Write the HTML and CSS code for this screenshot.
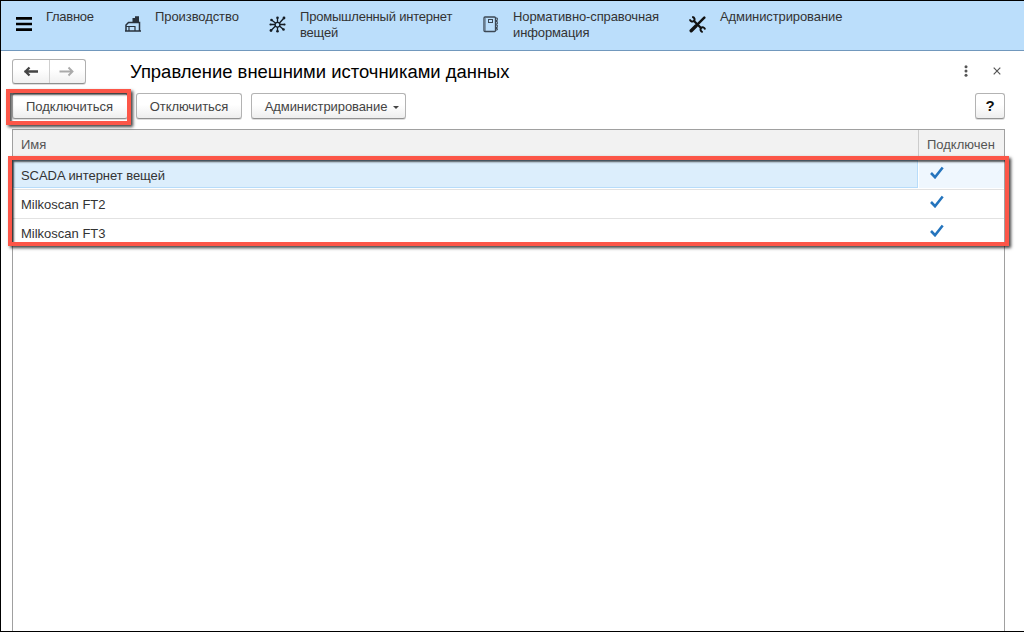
FILE: index.html
```html
<!DOCTYPE html>
<html lang="ru">
<head>
<meta charset="utf-8">
<title>Управление внешними источниками данных</title>
<link rel="stylesheet" href="styles.css">
</head>
<body>
<div class="app">
  <nav class="sections">
    <svg class="menu-icon" width="16" height="14" viewBox="0 0 16 14"><path d="M0 1.400h16M0 7h16M0 12.600h16" stroke="#000" stroke-width="2.600"/></svg>
    <a class="section main"><span class="t1">Главное</span></a>
    <a class="section production">
      <svg width="16" height="16" viewBox="0 0 16 16"><path d="M7.500 6V2H10V.3h4V6z" fill="#29323c"/><path d="M1 15V9l2.500-2.500h11V15M0 15h16" fill="none" stroke="#29323c" stroke-width="1.500"/><path d="M1 10.500h9.500M4 15v-4.500M10 15v-4.500" fill="none" stroke="#29323c" stroke-width="1.200"/></svg>
      <span class="t2">Производство</span>
    </a>
    <a class="section iot">
      <svg width="17" height="17" viewBox="0 0 17 17"><g stroke="#141c24" fill="none" stroke-width="1.300"><circle cx="8.500" cy="8.800" r="2.400"/><path d="M8.500 6V2M8.500 11v4M6.500 7 2.500 4M10.500 7 15 2M6.500 10l-4.500 4.500M10.500 10l4 3.500M6 8.500H1.500M11 8.500h4.500"/></g><g fill="#141c24"><circle cx="8.500" cy="1.800" r="1.300"/><circle cx="8.500" cy="15.200" r="1.300"/><circle cx="2.500" cy="4" r="1.300"/><circle cx="15" cy="2" r="1.400"/><circle cx="2" cy="14.500" r="1.400"/><circle cx="14.500" cy="13.500" r="1.300"/><circle cx="1.500" cy="8.500" r="1.100"/><circle cx="15.500" cy="8.500" r="1.100"/></g></svg>
      <span class="t3">Промышленный интернет<br>вещей</span>
    </a>
    <a class="section reference">
      <svg width="16" height="17" viewBox="0 0 16 17"><g fill="none" stroke="#3c4854"><rect x="1" y="1" width="11.500" height="14.500" rx="1" stroke-width="1.300"/><path d="M2.500 2v13" opacity=".45"/><rect x="5.500" y="3.500" width="4" height="3"/><path d="M13 2h1.300v2.500H13M13 5.500h1.300V8H13M13 9h1.300v2.500H13M13 12.500h1.300V14H13"/></g></svg>
      <span class="t4">Нормативно-справочная<br>информация</span>
    </a>
    <a class="section admin">
      <svg width="17" height="17" viewBox="0 0 17 17"><g fill="none" stroke="#111"><path d="M4.500 4.500l8 8" stroke-width="2.300"/><path d="M3.200.9C5.800 1.300 6 3.800 4.900 4.900S1.400 5.800.9 3.400" stroke-width="2"/><path d="M16.100 13.400c-.6-2.200-2.800-2.600-3.900-1.500s-.9 3.500 1.500 4.200" stroke-width="2"/><path d="M15.300 1.700l-7 7" stroke-width="2.500" stroke-linecap="round"/><path d="M7.200 9.800l-5 5" stroke-width="3.400" stroke-linecap="round"/></g></svg>
      <span class="t5">Администрирование</span>
    </a>
  </nav>
  <main class="page">
    <header class="title-row">
      <div class="history">
        <span><svg width="16" height="12" viewBox="0 0 16 12"><path d="M1.500 5.500h13.500M6.500 1.500l-4 4 4 4" fill="none" stroke="#444" stroke-width="2.300"/></svg></span>
        <span><svg width="16" height="12" viewBox="0 0 16 12"><path d="M.5 5.500h13M9.500 1.500l4 4-4 4" fill="none" stroke="#aaa" stroke-width="1.900"/></svg></span>
      </div>
      <h1>Управление внешними источниками данных</h1>
      <svg class="dots" width="4" height="12" viewBox="0 0 4 12"><g fill="#555"><circle cx="2" cy="1.700" r="1.500"/><circle cx="2" cy="6" r="1.500"/><circle cx="2" cy="10.300" r="1.500"/></g></svg>
      <svg class="close" width="8" height="8" viewBox="0 0 8 8"><path d="M.7.700l6.600 6.600M7.300.700.700 7.300" stroke="#555" stroke-width="1.200"/></svg>
    </header>
    <div class="toolbar">
      <button class="btn connect"><span>Подключиться</span></button>
      <button class="btn disconnect"><span>Отключиться</span></button>
      <button class="btn manage"><span>Администрирование</span><i class="caret"></i></button>
      <button class="btn help">?</button>
    </div>
    <section class="grid">
      <div class="row head"><div class="name">Имя</div><div class="state">Подключен</div></div>
      <div class="row selected"><div class="name"><span class="scada">SCADA интернет вещей</span></div><div class="state"><svg width="14" height="13" viewBox="0 0 14 13"><path d="M1 7l4 4.200L12.700 1.500" fill="none" stroke="#2474bd" stroke-width="2.600"/></svg></div></div>
      <div class="row"><div class="name">Milkoscan FT2</div><div class="state"><svg width="14" height="13" viewBox="0 0 14 13"><path d="M1 7l4 4.200L12.700 1.500" fill="none" stroke="#2474bd" stroke-width="2.600"/></svg></div></div>
      <div class="row last"><div class="name">Milkoscan FT3</div><div class="state"><svg width="14" height="13" viewBox="0 0 14 13"><path d="M1 7l4 4.200L12.700 1.500" fill="none" stroke="#2474bd" stroke-width="2.600"/></svg></div></div>
    </section>
  </main>
  <div class="mark mark-button"></div>
  <div class="mark mark-rows"></div>
</div>
</body>
</html>
```
FILE: styles.css
```css
* { box-sizing: border-box; }
body { margin: 0; background: #fff; font: 13px/16px "Liberation Sans", Arial, sans-serif; color: #333; }
.app { position: relative; width: 1024px; height: 632px; display: flex; flex-direction: column; overflow: hidden; border: solid #000; border-width: 1px 0 1px 1px; }
svg { display: block; flex: none; }
span { white-space: nowrap; }

.sections { display: flex; align-items: flex-start; height: 50px; flex: none; padding: 8px 0 0 15px; background: #bbdefb; border-bottom: 1px solid #7198bd; color: #333; }
.menu-icon { margin-top: 8px; }
.section { display: flex; }
.section svg { margin-top: 7px; }
.main { width: 93px; padding-left: 14px; }
.production { width: 144px; gap: 14px; }
.iot { width: 214px; gap: 14px; }
.reference { width: 206px; gap: 14px; }
.admin { gap: 14px; }
.t1 { letter-spacing: -.28px; }
.t2 { letter-spacing: -.08px; }
.t3 { letter-spacing: -.21px; }
.t4 { letter-spacing: -.12px; }
.t5 { letter-spacing: -.1px; }

.page { flex: 1; display: flex; flex-direction: column; padding: 8px 19px 0 11px; }
.title-row { display: flex; align-items: center; height: 25px; }
.history { display: flex; width: 74px; height: 25px; border: 1px solid #b0b0b0; border-bottom-color: #8f8f8f; border-radius: 3px; background: linear-gradient(#fff 40%, #f0f0f0); box-shadow: 0 1px 0 #ddd; }
.history span { flex: 1; display: flex; align-items: center; justify-content: center; }
.history span + span { border-left: 1px solid #d0d0d0; }
h1 { margin: 0 auto 0 44px; font-size: 18.45px; line-height: 24px; font-weight: 400; color: #000; white-space: nowrap; }
.dots { margin: 0 25px 2px 0; }
.close { margin: 0 4px 2px 0; }

.toolbar { display: flex; margin-top: 9px; height: 27px; }
.btn { display: flex; align-items: center; justify-content: center; height: 26px; padding: 2px 0 0; border: 1px solid #b3b3b3; border-bottom-color: #929292; border-radius: 3px; background: linear-gradient(#fff 45%, #eee); box-shadow: 0 1px 0 #ddd; font: inherit; color: #444; }
.connect { width: 116px; margin-right: 8px; padding-right: 1px; }
.disconnect { width: 106px; margin-right: 9px; letter-spacing: -.08px; }
.manage { width: 155px; gap: 6px; padding-left: 7px; letter-spacing: -.08px; }
.help { width: 30px; margin-left: auto; padding-top: 0; font-size: 15px; font-weight: 700; color: #111; }
.caret { border: 3px solid transparent; border-top-color: #444; border-bottom: 0; margin-top: 1px; }

.grid { flex: 1; margin-top: 9px; border: 1px solid #a0a0a0; border-bottom: 0; }
.row { display: flex; height: 29px; border-bottom: 1px solid #e2e2e2; }
.row.last { border-bottom: 0; }
.name { flex: 1; padding: 7px 8px 0; }
.state { width: 86px; padding-left: 12px; padding-top: 5px; }
.head { height: 30px; background: #f2f2f2; border: 0; color: #555; }
.head .state { padding: 7px 0 0 8px; border-left: 1px solid #ccc; }
.row.selected { height: 30px; }
.selected .name { padding: 7px 7px 0; background: #dceefc; border: 1px solid #b7dcfa; height: 28px; margin-right: 1px; }
.selected .state { background: #eff7fe; height: 28px; padding-top: 6px; width: 85px; padding-left: 11px; }
.scada { letter-spacing: -.05px; }

.mark { position: absolute; border: 4px solid #fc5648; box-shadow: 2px 2px 3px rgba(0,0,0,.75), inset 2px 2px 2px rgba(0,0,0,.65); }
.mark-button { left: 5px; top: 88px; width: 125px; height: 36px; }
.mark-rows { left: 7px; top: 155px; width: 1001px; height: 90px; }
```
